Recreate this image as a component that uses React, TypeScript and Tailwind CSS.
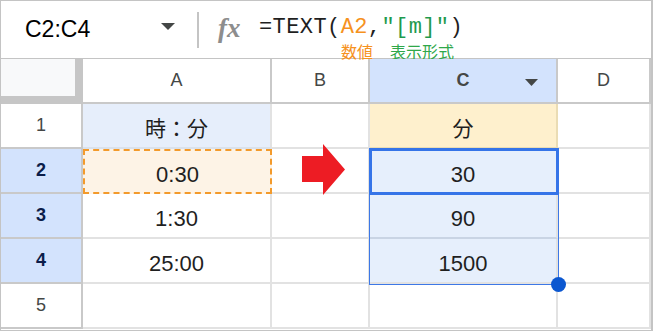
const cellBase = "flex items-center justify-center border-r-2 border-b-2 border-[#e2e2e2]";
const headBase = "flex items-center justify-center border-r-2 border-b-2 border-[#c9c9c9] text-[18px] text-[#444746]";
const rowHead = "flex items-center justify-center border-r-2 border-b-2 border-[#c9c9c9] text-[18px]";

const FormulaBar = () => {
  return (
    <div className="flex items-center h-[58px] border-b border-[#c4c4c4] bg-white">
      <div className="w-[196px] flex items-center pl-[24px] pr-[22px] justify-between">
        <span className="text-[23px] text-black leading-none" style={{ fontFamily: "'Liberation Sans', Arial, sans-serif" }}>
          C2:C4
        </span>
        <svg width="14" height="8" viewBox="0 0 14 8" className="mt-[-6px]">
          <path d="M0 0h14L7 7z" fill="#444746" />
        </svg>
      </div>
      <div className="w-[2px] h-[36px] bg-[#c4c4c4]" />
      <span
        className="ml-[19px] w-[26px] text-[27px] italic font-bold text-[#8d8d8d] leading-none mt-[-2px]"
        style={{ fontFamily: "'Liberation Serif', serif" }}
      >
        fx
      </span>
      <div className="relative ml-[15px] mt-[-6px] h-[22px]">
        <div
          className="inline-block h-[22px] text-[22px] leading-[22px] tracking-[0.4px] text-[#1f1f1f] whitespace-pre"
          style={{ fontFamily: "'Liberation Mono', 'DejaVu Sans Mono', monospace" }}
        >
          =TEXT(<span className="text-[#f6921e]">A2</span>,<span className="text-[#1f9a4e]">"[m]"</span>)
        </div>
        <div
          className="absolute left-[82px] top-[27px] flex gap-[17px] text-[16px] leading-[16px] whitespace-nowrap"
          style={{ fontFamily: "'Noto Sans CJK JP', sans-serif" }}
        >
          <span className="inline-block h-[16px] text-[#f6921e]">数値</span>
          <span className="inline-block h-[16px] text-[#2fa84a]">表示形式</span>
        </div>
      </div>
    </div>
  );
};

export default function App() {
  const sans = { fontFamily: "'Liberation Sans', Arial, sans-serif" };
  const cjk = { fontFamily: "'Liberation Sans', 'Noto Sans CJK JP', sans-serif" };
  return (
    <div className="w-[653px] h-[331px] overflow-hidden bg-white border border-r-2 border-[#c4c4c4]" style={sans}>
      <FormulaBar />
      <div className="relative grid grid-cols-[82px_189px_98px_188px_1fr] grid-rows-[45px_45px_45px_45px_45px_45px]">
        {/* header row */}
        <div className="bg-[#f8f9fa] border-r-[8px] border-b-[8px] border-[#c6c6c6]" />
        <div className={headBase}>A</div>
        <div className={headBase}>B</div>
        <div className={`${headBase} relative bg-[#d3e3fd] font-bold text-[#0b1d4a]`}>
          C
          <svg width="13" height="7" viewBox="0 0 13 7" className="absolute right-[18px] top-[20px]">
            <path d="M0 0h13L6.5 7z" fill="#444746" />
          </svg>
        </div>
        <div className={`${headBase} border-r-0`}>D</div>

        {/* row 1 */}
        <div className={`${rowHead} text-[#444746]`}>1</div>
        <div className={`${cellBase} bg-[#e6eefb] border-b-[#d9e1ec] text-[21px] text-[#1f1f1f] pt-[6px]`} style={cjk}>
          時：分
        </div>
        <div className={cellBase} />
        <div className={`${cellBase} bg-[#fef0cd] border-[#eadcb4] text-[21px] text-[#1f1f1f] pt-[6px]`} style={cjk}>
          分
        </div>
        <div className={`${cellBase} border-r-0`} />

        {/* row 2 */}
        <div className={`${rowHead} bg-[#d3e3fd] font-bold text-[#0b1d4a]`}>2</div>
        <div className="flex items-center justify-center bg-[#fdf3e6] border-2 border-dashed border-[#f39a2b] text-[22px] text-[#1f1f1f] pt-[6px]">
          0:30
        </div>
        <div className={cellBase} />
        <div className={`${cellBase} bg-[#e6effc] text-[22px] text-[#1f1f1f] pt-[8px]`}>30</div>
        <div className={`${cellBase} border-r-0`} />

        {/* row 3 */}
        <div className={`${rowHead} bg-[#d3e3fd] font-bold text-[#0b1d4a]`}>3</div>
        <div className={`${cellBase} text-[22px] text-[#1f1f1f] pt-[6px]`}>1:30</div>
        <div className={cellBase} />
        <div className={`${cellBase} bg-[#e6effc] border-b-[#c9d4e4] text-[22px] text-[#1f1f1f] pt-[6px]`}>90</div>
        <div className={`${cellBase} border-r-0`} />

        {/* row 4 */}
        <div className={`${rowHead} bg-[#d3e3fd] font-bold text-[#0b1d4a]`}>4</div>
        <div className={`${cellBase} text-[22px] text-[#1f1f1f] pt-[6px]`}>25:00</div>
        <div className={cellBase} />
        <div className={`${cellBase} bg-[#e6effc] text-[22px] text-[#1f1f1f] pt-[6px]`}>1500</div>
        <div className={`${cellBase} border-r-0`} />

        {/* row 5 */}
        <div className={`${rowHead} text-[#444746]`}>5</div>
        <div className={cellBase} />
        <div className={cellBase} />
        <div className={cellBase} />
        <div className={`${cellBase} border-r-0`} />

        {/* selection range C2:C4 */}
        <div className="absolute left-[368px] top-[89px] w-[190px] h-[137px] border border-[#3d78e6] pointer-events-none" />
        <div className="absolute left-[368px] top-[89px] w-[190px] h-[47px] border-[3px] border-[#3574e8] pointer-events-none" />
        <div className="absolute left-[550px] top-[218px] w-[15px] h-[15px] rounded-full bg-[#0b57d0]" />

        {/* red arrow */}
        <svg width="44" height="51" viewBox="0 0 44 51" className="absolute left-[301px] top-[85px]">
          <polygon points="0,12 21,12 21,0 43,25.5 21,51 21,38 0,38" fill="#ed1c24" />
        </svg>
      </div>
    </div>
  );
}
